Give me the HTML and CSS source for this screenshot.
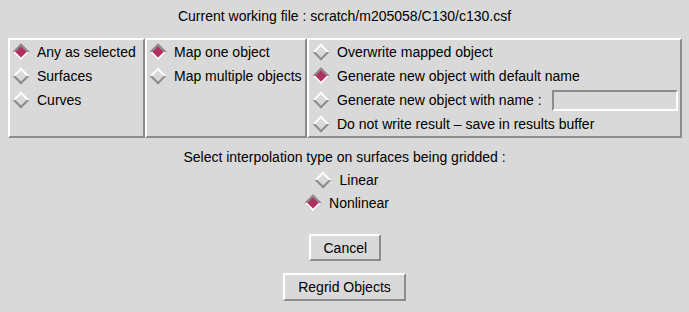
FILE: index.html
```html
<!DOCTYPE html>
<html lang="en">
<head>
    <meta charset="UTF-8">
    <title>Regrid Objects</title>
    <link rel="stylesheet" href="styles.css">
</head>
<body>

    <!-- 当前文件 -->
    <div class="title">Current working file : scratch/m205058/C130/c130.csf</div>

    <!-- 三个选项面板 -->
    <div class="frame">
        <div class="panel panel-select">
            <div class="row"><span class="radio"><i class="dia on"></i></span>Any as selected</div>
            <div class="row"><span class="radio"><i class="dia"></i></span>Surfaces</div>
            <div class="row"><span class="radio"><i class="dia"></i></span>Curves</div>
        </div>
        <div class="panel panel-map">
            <div class="row"><span class="radio"><i class="dia on"></i></span>Map one object</div>
            <div class="row"><span class="radio"><i class="dia"></i></span>Map multiple objects</div>
        </div>
        <div class="panel panel-out">
            <div class="row"><span class="radio"><i class="dia"></i></span>Overwrite mapped object</div>
            <div class="row"><span class="radio"><i class="dia on"></i></span>Generate new object with default name</div>
            <div class="row"><span class="radio"><i class="dia"></i></span>Generate new object with name :<input type="text" class="name-field"></div>
            <div class="row"><span class="radio"><i class="dia"></i></span>Do not write result &ndash; save in results buffer</div>
        </div>
    </div>

    <!-- 插值类型 -->
    <div class="label">Select interpolation type on surfaces being gridded :</div>
    <div class="choices">
        <div class="choice"><span class="radio"><i class="dia"></i></span>Linear</div>
        <div class="choice"><span class="radio"><i class="dia on"></i></span>Nonlinear</div>
    </div>

    <div class="buttons">
        <button type="button" class="btn btn-cancel">Cancel</button>
        <button type="button" class="btn btn-go">Regrid Objects</button>
    </div>

</body>
</html>
```

FILE: styles.css
```css
body {
    margin: 0;
    background: #d9d9d9;
    color: #000;
    font-family: "Liberation Sans", Arial, sans-serif;
    font-size: 14px;
}

.title { text-align: center; padding-top: 7px; line-height: 18px; height: 31px; }

/* 面板 */
.frame { display: flex; margin: 0 7px 0 8px; height: 100px; }
.panel {
    box-sizing: border-box;
    height: 100px;
    border: 2px solid;
    border-color: #fff #8c8c8c #8c8c8c #fff;
    padding-left: 2px;
}
.panel-select { width: 137px; }
.panel-map { width: 162px; }
.panel-out { flex: 1; padding-left: 3px; }

.row { display: flex; align-items: center; height: 24px; white-space: nowrap; }

/* 菱形单选按钮 */
.radio {
    display: inline-flex;
    align-items: center;
    justify-content: center;
    width: 17px;
    height: 17px;
    margin-right: 8px;
    flex: none;
}
.dia {
    display: block;
    box-sizing: border-box;
    width: 12px;
    height: 12px;
    border: 2px solid;
    border-color: #fff #8c8c8c #8c8c8c #fff;
    transform: rotate(45deg);
}
.dia.on {
    background: #b03060;
    border-color: #8c8c8c #fff #fff #8c8c8c;
}

.name-field {
    box-sizing: border-box;
    width: 126px;
    height: 21px;
    margin: 0 0 0 10px;
    border: 2px solid;
    border-color: #8c8c8c #fff #fff #8c8c8c;
    background: #d9d9d9;
}

.label { text-align: center; margin-top: 10px; line-height: 18px; }
.choices { display: flex; flex-direction: column; align-items: center; margin-top: 2px; padding-left: 4px; }
.choice { display: flex; align-items: center; height: 23px; }

/* 按钮 */
.buttons { display: flex; flex-direction: column; align-items: center; gap: 12px; margin-top: 20px; }
.btn {
    box-sizing: border-box;
    height: 28px;
    padding: 0 13px;
    border: 2px solid;
    border-color: #fff #8c8c8c #8c8c8c #fff;
    background: #d9d9d9;
    font-family: inherit;
    font-size: 14px;
    color: #000;
    white-space: nowrap;
}
.btn-cancel { width: 72px; height: 27px; }
.btn-go { padding: 0 13px; }
```
